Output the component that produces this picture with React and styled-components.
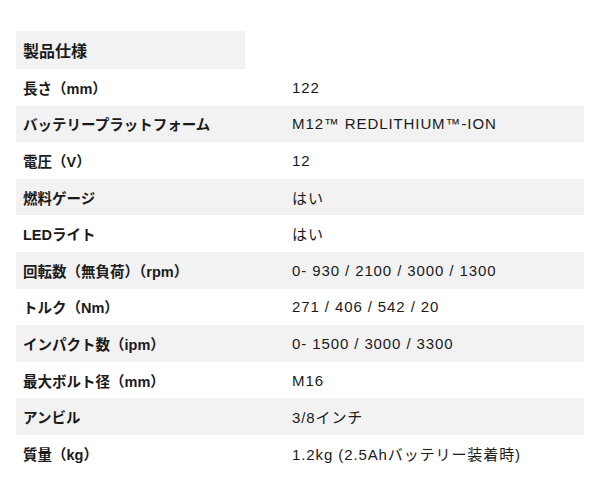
import styled, { createGlobalStyle } from 'styled-components'

const GlobalStyle = createGlobalStyle`
body {
    margin: 0;
    background: #fff;
    font-family: "Liberation Sans", "Noto Sans CJK JP", sans-serif;
    color: #1a1a1a;
}
`

const Wrapper = styled.div`
padding: 31px 16px 0 16px;
`

const Header = styled.div`
width: 229px;
height: 38px;
background: #f2f2f2;
display: flex;
align-items: center;
padding-left: 7px;
box-sizing: border-box;
font-size: 16px;
font-weight: 700;
`

const Table = styled.div`
display: flex;
flex-direction: column;
`

const Row = styled.div`
display: grid;
grid-template-columns: 269px 1fr;
height: 36.6px;
align-items: center;
background: ${props => props.shaded ? '#f2f2f2' : '#fff'};
font-size: 14.5px;
`

const Label = styled.div`
padding-left: 7px;
font-weight: 600;
`

const Value = styled.div`
padding-left: 7px;
font-size: 15px;
letter-spacing: 0.9px;
`

const specs = [
    ['長さ（mm）', '122'],
    ['バッテリープラットフォーム', 'M12™ REDLITHIUM™-ION'],
    ['電圧（V）', '12'],
    ['燃料ゲージ', 'はい'],
    ['LEDライト', 'はい'],
    ['回転数（無負荷）（rpm）', '0- 930 / 2100 / 3000 / 1300'],
    ['トルク（Nm）', '271 / 406 / 542 / 20'],
    ['インパクト数（ipm）', '0- 1500 / 3000 / 3300'],
    ['最大ボルト径（mm）', 'M16'],
    ['アンビル', '3/8インチ'],
    ['質量（kg）', '1.2kg (2.5Ahバッテリー装着時)'],
]

const App = () => {
    return (
        <Wrapper>
            <GlobalStyle />
            <Header>製品仕様</Header>
            <Table>
                {specs.map(([label, value], i) => (
                    <Row key={label} shaded={i % 2 === 1}>
                        <Label>{label}</Label>
                        <Value>{value}</Value>
                    </Row>
                ))}
            </Table>
        </Wrapper>
    )
}

export default App
